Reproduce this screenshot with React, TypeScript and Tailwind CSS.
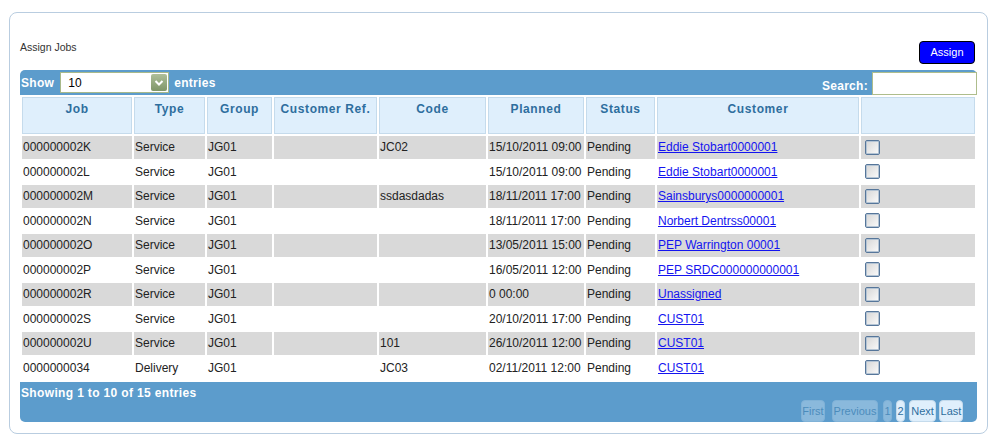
import React from 'react';

type Job = {
  job: string;
  type: string;
  group: string;
  ref: string;
  code: string;
  planned: string;
  status: string;
  customer: string;
};

const jobs: Job[] = [
  { job: '000000002K', type: 'Service', group: 'JG01', ref: '', code: 'JC02', planned: '15/10/2011 09:00', status: 'Pending', customer: 'Eddie Stobart0000001' },
  { job: '000000002L', type: 'Service', group: 'JG01', ref: '', code: '', planned: '15/10/2011 09:00', status: 'Pending', customer: 'Eddie Stobart0000001' },
  { job: '000000002M', type: 'Service', group: 'JG01', ref: '', code: 'ssdasdadas', planned: '18/11/2011 17:00', status: 'Pending', customer: 'Sainsburys0000000001' },
  { job: '000000002N', type: 'Service', group: 'JG01', ref: '', code: '', planned: '18/11/2011 17:00', status: 'Pending', customer: 'Norbert Dentrss00001' },
  { job: '000000002O', type: 'Service', group: 'JG01', ref: '', code: '', planned: '13/05/2011 15:00', status: 'Pending', customer: 'PEP Warrington 00001' },
  { job: '000000002P', type: 'Service', group: 'JG01', ref: '', code: '', planned: '16/05/2011 12:00', status: 'Pending', customer: 'PEP SRDC000000000001' },
  { job: '000000002R', type: 'Service', group: 'JG01', ref: '', code: '', planned: '0 00:00', status: 'Pending', customer: 'Unassigned' },
  { job: '000000002S', type: 'Service', group: 'JG01', ref: '', code: '', planned: '20/10/2011 17:00', status: 'Pending', customer: 'CUST01' },
  { job: '000000002U', type: 'Service', group: 'JG01', ref: '', code: '101', planned: '26/10/2011 12:00', status: 'Pending', customer: 'CUST01' },
  { job: '0000000034', type: 'Delivery', group: 'JG01', ref: '', code: 'JC03', planned: '02/11/2011 12:00', status: 'Pending', customer: 'CUST01' },
];

const headers = ['Job', 'Type', 'Group', 'Customer Ref.', 'Code', 'Planned', 'Status', 'Customer', ''];

const cols = 'grid grid-cols-[110px_71px_65px_103px_107px_96px_69px_202px_114px] gap-x-[2px] px-[2px]';

const PageButton: React.FC<{ label: string; width: string; disabled?: boolean }> = ({ label, width, disabled }) => (
  <span
    className={`${width} h-[22px] rounded-[4px] border border-[#c5dbec] bg-[#dfeffc] text-center text-[11px] leading-[20px] text-[#2e6e9e] ${disabled ? 'opacity-35' : ''}`}
  >
    {label}
  </span>
);

export default function App() {
  return (
    <div className="min-h-screen bg-white pl-[9px] pt-[12px] font-['Liberation_Sans',Arial,sans-serif]">
      <div className="h-[422px] w-[979px] rounded-[8px] border border-[#b9cde0] px-[10px] pt-[27px]">
        <div className="flex items-start justify-between pr-[2px]">
          <h1 className="pt-[1px] text-[10.5px] leading-[13px] text-[#333]">Assign Jobs</h1>
          <button className="mt-[1px] h-[23px] w-[56px] rounded-[4px] border border-black bg-[#0000ff] text-[11px] text-white">
            Assign
          </button>
        </div>

        <div className="mt-[6px] w-[957px]">
          {/* top toolbar */}
          <div className="flex h-[25px] items-start justify-between rounded-t-[5px] bg-[#5c9ccc] pl-[1px] text-[12px] font-bold tracking-[0.3px] text-white">
            <div className="flex items-start pt-[2px]">
              <span className="pt-[1px] leading-[21px]">Show</span>
              <div className="ml-[6px] flex h-[21px] w-[109px] items-center justify-between border border-[#a8b98a] bg-white">
                <span className="pl-[7px] text-[12px] font-normal tracking-normal text-black">10</span>
                <span className="mr-[1px] flex h-[17px] w-[16px] items-center justify-center rounded-[2px] bg-linear-to-b from-[#aebf99] to-[#7f9668]">
                  <svg width="10" height="8" viewBox="0 0 10 8">
                    <path d="M1.5 2 L5 5.5 L8.5 2" stroke="white" strokeWidth="2" fill="none" />
                  </svg>
                </span>
              </div>
              <span className="ml-[5px] pt-[1px] leading-[21px]">entries</span>
            </div>
            <div className="flex items-start pt-[2px]">
              <span className="mr-[4px] pt-[6px] leading-[17px]">Search:</span>
              <input className="h-[23px] w-[105px] border border-[#aebd8c] bg-white" />
            </div>
          </div>

          {/* header */}
          <div className={`${cols} mt-[2px] h-[37px]`}>
            {headers.map((h, i) => (
              <div
                key={i}
                className="border border-[#c5dbec] bg-[#dfeffc] pt-[4px] text-center text-[12px] font-bold leading-[14px] tracking-[0.6px] text-[#2e6e9e]"
              >
                {h}
              </div>
            ))}
          </div>

          {/* rows */}
          <div className="mt-[2px] flex flex-col gap-y-[2px]">
            {jobs.map((j, i) => {
              const bg = i % 2 === 0 ? 'bg-[#d9d9d9]' : 'bg-white';
              const cell = `${bg} pl-[1px] pt-[1px] text-[12px] leading-[21.5px] text-[#222] whitespace-nowrap`;
              return (
                <div key={j.job} className={`${cols} h-[22.5px]`}>
                  <div className={cell}>{j.job}</div>
                  <div className={cell}>{j.type}</div>
                  <div className={cell}>{j.group}</div>
                  <div className={cell}>{j.ref}</div>
                  <div className={cell}>{j.code}</div>
                  <div className={cell}>{j.planned}</div>
                  <div className={cell}>{j.status}</div>
                  <div className={cell}>
                    <a href="#" className="text-[#1414f0] underline">
                      {j.customer}
                    </a>
                  </div>
                  <div className={`${bg} flex items-center pl-[4px]`}>
                    <span className="h-[15px] w-[15px] rounded-[2px] border border-[#56769a] bg-linear-to-br from-[#d6d6d6] to-[#fbfbfb] shadow-[inset_0_0_0_1px_#b4c4d4]" />
                  </div>
                </div>
              );
            })}
          </div>

          {/* footer */}
          <div className="mt-[3px] flex h-[40px] flex-col justify-between rounded-b-[5px] bg-[#5c9ccc]">
            <div className="pl-[1px] pt-[4px] text-[12px] font-bold leading-[14px] tracking-[0.35px] text-white">
              Showing 1 to 10 of 15 entries
            </div>
            <div className="flex items-end justify-end pr-[14px]">
              <PageButton label="First" width="w-[24px]" disabled />
              <span className="w-[7px]" />
              <PageButton label="Previous" width="w-[46px]" disabled />
              <span className="w-[5px]" />
              <PageButton label="1" width="w-[9px]" disabled />
              <span className="w-[4px]" />
              <PageButton label="2" width="w-[9px]" />
              <span className="w-[4px]" />
              <PageButton label="Next" width="w-[27px]" />
              <span className="w-[3px]" />
              <PageButton label="Last" width="w-[24px]" />
            </div>
          </div>
        </div>
      </div>
    </div>
  );
}
